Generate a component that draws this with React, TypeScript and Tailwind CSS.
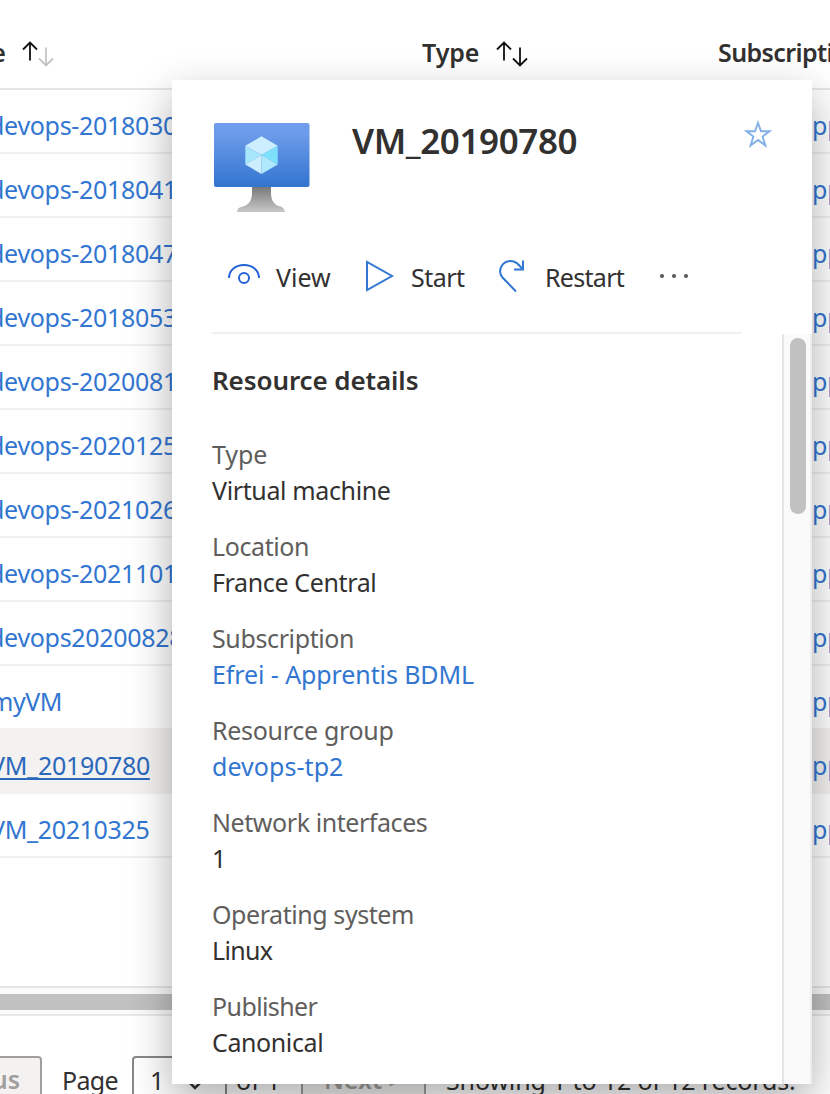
import React from "react";

const names = [
  { text: "devops-20180301", cls: "-ml-[11px] w-[807px] tracking-[-0.3px]" },
  { text: "devops-20180414", cls: "-ml-[11px] w-[807px] tracking-[-0.3px]" },
  { text: "devops-20180471", cls: "-ml-[11px] w-[807px] tracking-[-0.3px]" },
  { text: "devops-20180532", cls: "-ml-[11px] w-[807px] tracking-[-0.3px]" },
  { text: "devops-20200817", cls: "-ml-[11px] w-[807px] tracking-[-0.3px]" },
  { text: "devops-20201253", cls: "-ml-[11px] w-[807px] tracking-[-0.3px]" },
  { text: "devops-20210264", cls: "-ml-[11px] w-[807px] tracking-[-0.3px]" },
  { text: "devops-20211017", cls: "-ml-[11px] w-[807px] tracking-[-0.3px]" },
  { text: "devops202008281", cls: "-ml-[11px] w-[807px] tracking-[-0.3px]" },
  { text: "myVM", cls: "-ml-[10px] w-[806px] tracking-[-0.5px]" },
  { text: "VM_20190780", cls: "-ml-[10px] w-[806px] tracking-[-0.3px]", active: true },
  { text: "VM_20210325", cls: "-ml-[10px] w-[806px] tracking-[-0.35px]" },
];

const details = [
  { label: "Type", value: "Virtual machine", l: "tracking-[-0.1px]", v: "tracking-[-0.37px]" },
  { label: "Location", value: "France Central", l: "tracking-[-0.4px]", v: "tracking-[-0.37px]" },
  { label: "Subscription", value: "Efrei - Apprentis BDML", l: "tracking-[-0.38px]", v: "tracking-[-0.1px]", link: true },
  { label: "Resource group", value: "devops-tp2", l: "tracking-[-0.3px]", v: "tracking-[0.05px]", link: true },
  { label: "Network interfaces", value: "1", l: "tracking-[-0.43px]", v: "tracking-[-0.3px]" },
  { label: "Operating system", value: "Linux", l: "tracking-[-0.43px]", v: "tracking-[-0.7px]" },
  { label: "Publisher", value: "Canonical", l: "tracking-[-0.6px]", v: "tracking-[-0.4px]" },
];

function SortIcon({ downColor }: { downColor: string }) {
  return (
    <svg width="32" height="26" viewBox="0 0 32 26" fill="none" strokeWidth="1.8">
      <path d="M8 19.500V2M1 8.500L8 1.500L15 8.500" stroke="#111" />
      <path d="M24 6.500V24M17 17.500L24 24.500L31 17.500" stroke={downColor} />
    </svg>
  );
}

function MachineIcon() {
  return (
    <svg width="96" height="90" viewBox="0 0 96 90">
      <defs>
        <linearGradient id="screen" x1="0" y1="0" x2="0" y2="1">
          <stop offset="0" stopColor="#6f9eec" />
          <stop offset="0.200" stopColor="#6a9ae9" />
          <stop offset="1" stopColor="#3374cf" />
        </linearGradient>
        <linearGradient id="stand" x1="0" y1="0" x2="0" y2="1">
          <stop offset="0" stopColor="#767676" />
          <stop offset="1" stopColor="#c8c8c8" />
        </linearGradient>
      </defs>
      <path d="M38 63H57V70Q57 82 68 84Q71 86 71 89H23Q23 85 27 84Q38 82 38 70Z" fill="url(#stand)" />
      <rect width="95.500" height="64" rx="2" fill="url(#screen)" />
      <path d="M47.500 13.300L63.700 22.800L47.500 32L31.300 22.800Z" fill="#cdeeff" />
      <path d="M31.300 22.800L47.500 32L31.300 41.600Z" fill="#a7e6fb" />
      <path d="M63.700 22.800V41.600L47.500 32Z" fill="#7fe0fb" />
      <path d="M47.500 32V51L31.300 41.600Z" fill="#cdeeff" />
      <path d="M47.500 32L63.700 41.600L47.500 51Z" fill="#b0e8fb" />
    </svg>
  );
}

function Panel() {
  return (
    <section className="absolute left-[172px] top-[80px] flex h-[1004px] w-[640px] flex-col bg-white shadow-[0_16px_40px_rgba(0,0,0,0.32)]">
      <header className="mr-[70px] ml-[40px] h-[254px] shrink-0 border-b-2 border-[#f0f0f0]">
        <div className="flex h-[178px] items-start pt-[43px] pl-[2px]">
          <MachineIcon />
          <h1 className="ml-[42px] mt-[-4px] w-[392px] text-[35px]/[44px] font-semibold tracking-[-0.4px] text-[#323130]">VM_20190780</h1>
          <svg className="-mt-[3px] -mr-8 shrink-0" width="28" height="28" viewBox="0 0 28 28" fill="none" stroke="#82aee8" strokeWidth="1.9">
            <path d="M14 2.800L17 11.200H25.400L18.600 16.500L21.400 25.500L14 20L6.600 25.500L9.400 16.500L2.600 11.200H11Z" />
          </svg>
        </div>
        <div className="flex h-10 items-center text-[25px]">
          <svg className="-mt-[3px] ml-[15px] shrink-0" width="34" height="30" viewBox="0 0 34 30" fill="none" stroke="#2563d6" strokeWidth="2">
            <path d="M2 16C2 8 9 3 17 3S32 8 32 16" />
            <circle cx="17" cy="16" r="5" />
          </svg>
          <span className="ml-[15px] w-[89px]">View</span>
          <svg className="-mt-1 shrink-0" width="30" height="34" viewBox="0 0 30 34" fill="none" stroke="#3277d2" strokeWidth="2">
            <path d="M2 3V31L27 17Z" />
          </svg>
          <span className="ml-4 w-[87px] tracking-[-0.5px]">Start</span>
          <svg className="-mt-1 shrink-0" width="28" height="34" viewBox="0 0 28 34" fill="none" stroke="#3277d2" strokeWidth="2">
            <path d="M18 32.500L4.500 18.500C-1 12 4 2 12.500 2C18 2 21 6 25 10.500M25 1.500V10.500H16" />
          </svg>
          <span className="ml-[19px] w-[114px] tracking-[-0.7px]">Restart</span>
          <svg className="-mt-1 shrink-0" width="30" height="6" viewBox="0 0 30 6" fill="#555">
            <circle cx="3" cy="3" r="2" /><circle cx="15" cy="3" r="2" /><circle cx="27" cy="3" r="2" />
          </svg>
        </div>
      </header>
      <div className="flex min-h-0 flex-1">
        <div className="flex-1 overflow-hidden pl-10">
          <h2 className="mt-[29px] text-[26px]/[34px] font-semibold tracking-[-0.1px]">Resource details</h2>
          <dl className="mt-[39px] flex flex-col gap-5">
            {details.map((d) => (
              <div key={d.label} className="text-[25px]/[36px]">
                <dt className="text-[#605e5c]"><span className={d.l}>{d.label}</span></dt>
                <dd className={d.link ? "text-[#3276d1]" : ""}><span className={d.v}>{d.value}</span></dd>
              </div>
            ))}
          </dl>
        </div>
        <div className="flex w-[30px] justify-center border-r-2 border-l-2 border-r-[#ededed] border-l-[#e6e6e6] bg-[#fafafa] pt-1 pl-1">
          <div className="mr-[2px] h-[176px] w-4 rounded-full bg-[#c1c1c1]" />
        </div>
      </div>
    </section>
  );
}

export default function App() {
  return (
    <main className="relative h-[1094px] w-[830px] overflow-hidden bg-white font-['Noto_Sans','Open_Sans',sans-serif] text-[25px] whitespace-nowrap text-[#323130]">
      <div className="flex h-[90px] items-start border-b-2 border-[#e6e6e6] pt-[35px] text-[25px]/[34px] font-semibold">
        <div className="flex w-[422px] shrink-0">
          <span className="-ml-[68px] w-[74px] text-right">Name</span>
          <span className="mt-[6px] ml-[16px]"><SortIcon downColor="#c4c4c4" /></span>
        </div>
        <div className="flex w-[296px] shrink-0">
          <span className="w-[74px] tracking-[-0.1px]">Type</span>
          <span className="mt-[6px]"><SortIcon downColor="#111" /></span>
        </div>
        <span className="tracking-[-0.6px]">Subscription</span>
      </div>
      <div className="flex h-[898px] flex-col border-b-2 border-[#e6e6e6]">
        {names.map((n) => (
          <div
            key={n.text}
            className={
              n.active
                ? "-mt-[2px] flex h-[66px] shrink-0 items-center bg-[#f3f2f1] pt-[10px] text-[#2b68bb]"
                : "flex h-[64px] shrink-0 items-center border-b-2 border-[#f0f0f0] pt-[10px] text-[#3276d1]"
            }
          >
            <span className={`${n.cls} shrink-0`}>
              <span className={n.active ? "underline decoration-2 underline-offset-[3px]" : ""}>{n.text}</span>
            </span>
            <span className="text-[#3276d1]">Apprentis</span>
          </div>
        ))}
      </div>
      <div className="flex h-[28px] items-center border-b-2 border-[#e9e9e9] bg-[#fafafa] pt-[2px]">
        <div className="h-4 w-full bg-[#c1c1c1]" />
      </div>
      <footer className="mt-10 flex h-[50px] text-[25px]/[49px]">
        <span className="-ml-[100px] w-[142px] shrink-0 rounded border-2 border-[#a19f9d] bg-[#f3f2f1] pr-5 text-right leading-[43px] font-semibold text-[#a19f9d]">Previous</span>
        <span className="ml-5 w-[70px] shrink-0 tracking-[-0.7px]">Page</span>
        <span className="flex w-[95px] shrink-0 items-start justify-between rounded border-2 border-[#8a8886] pr-[22px] pl-[16px] leading-[45px]">
          1
          <svg className="mt-[23px]" width="16" height="10" viewBox="0 0 16 10" fill="none" stroke="#323130" strokeWidth="2.500"><path d="M2 1L8 7L14 1" /></svg>
        </span>
        <span className="ml-[9px] w-[65px] shrink-0">of 1</span>
        <span className="w-[125px] shrink-0 rounded border-2 border-[#a19f9d] bg-[#f3f2f1] pl-[21px] leading-[43px] font-semibold text-[#a19f9d]">Next &gt;</span>
        <span className="ml-5 tracking-[-0.15px]">Showing 1 to 12 of 12 records.</span>
      </footer>
      <Panel />
    </main>
  );
}
